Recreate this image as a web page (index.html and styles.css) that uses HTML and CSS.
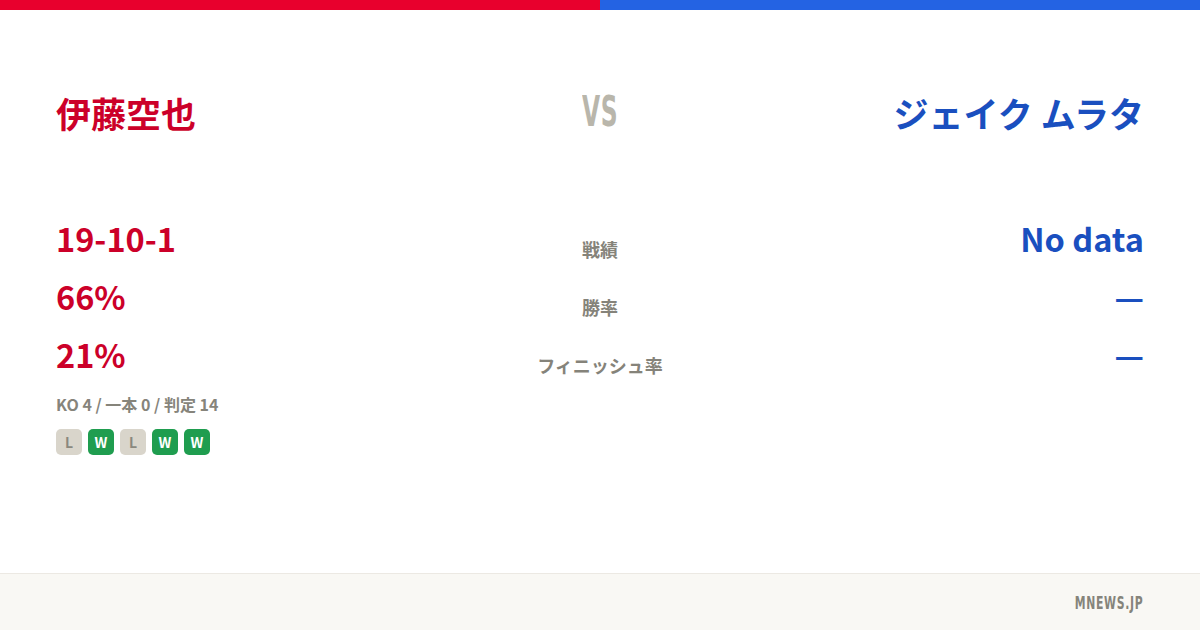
FILE: index.html
```html
<!DOCTYPE html>
<html lang="ja">
<head>
<meta charset="utf-8">
<link rel="stylesheet" href="styles.css">
</head>
<body>
<div class="card">
  <div class="topbar"><div class="bar-red"></div><div class="bar-blue"></div></div>
  <main class="main">
    <div class="names">
      <div class="name red">伊藤空也</div>
      <div class="vs"><span>VS</span></div>
      <div class="name blue right">ジェイク ムラタ</div>
    </div>
    <div class="stats">
      <div class="val red">19-10-1</div><div class="label">戦績</div><div class="val blue right">No data</div>
      <div class="val red">66%</div><div class="label">勝率</div><div class="val blue right">—</div>
      <div class="val red">21%</div><div class="label">フィニッシュ率</div><div class="val blue right">—</div>
    </div>
    <div class="detail">KO 4 / 一本 0 / 判定 14</div>
    <div class="form">
      <span class="badge loss">L</span>
      <span class="badge win">W</span>
      <span class="badge loss">L</span>
      <span class="badge win">W</span>
      <span class="badge win">W</span>
    </div>
  </main>
  <footer class="footer"><span class="brand">MNEWS.JP</span></footer>
</div>
</body>
</html>
```
FILE: styles.css
```css
* { box-sizing: border-box; margin: 0; padding: 0; }
html, body { width: 1200px; height: 630px; overflow: hidden; background: #fff; }
body { font-family: "Noto Sans CJK JP", "Noto Sans", sans-serif; font-weight: 700; }
.card { width: 1200px; height: 630px; display: flex; flex-direction: column; }
.topbar { display: flex; height: 10px; }
.bar-red { flex: 1; background: #e8002d; }
.bar-blue { flex: 1; background: #2463e3; }
.main { flex: 1; padding: 81px 56px 0 56px; }
.names { display: grid; grid-template-columns: 1fr auto 1fr; align-items: center; }
.name { font-size: 35px; line-height: 43px; }
.red { color: #cc0029; }
.blue { color: #1a4fbf; }
.right { text-align: right; }
.vs { text-align: center; margin-top: -3px; }
.vs span { display: inline-block; font-family: "DejaVu Sans Condensed", sans-serif; font-weight: 700; font-size: 42px; line-height: 43px; color: #b9b6ab; transform: scaleX(0.62); letter-spacing: 1px; }
.stats { margin-top: 83px; display: grid; grid-template-columns: 1fr auto 1fr; align-items: baseline; row-gap: 17px; }
.val { font-size: 32.5px; line-height: 41px; }
.label { font-size: 18px; color: #85837a; text-align: center; position: relative; top: 5px; }
.detail { margin-top: 18px; font-size: 16px; line-height: 24px; color: #86847b; }
.form { margin-top: 13px; display: flex; gap: 6px; }
.badge { width: 26px; height: 26px; border-radius: 5px; display: flex; align-items: center; justify-content: center; font-size: 14px; line-height: 1; }
.loss { background: #d9d5cb; color: #8a887e; }
.win { background: #1f9d4f; color: #fff; }
.footer { height: 57px; background: #f9f8f4; border-top: 1px solid #ece9e3; display: flex; align-items: center; justify-content: flex-end; padding-right: 57px; }
.brand { display: inline-block; font-family: "DejaVu Sans Condensed", sans-serif; font-weight: 700; font-size: 18px; color: #85847b; letter-spacing: 1px; transform: scaleX(0.67); transform-origin: right center; }
```
